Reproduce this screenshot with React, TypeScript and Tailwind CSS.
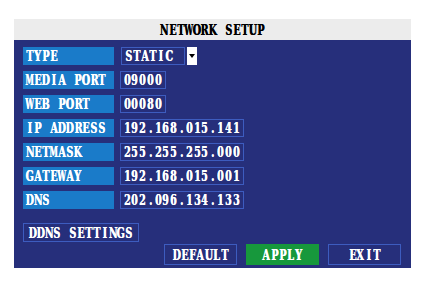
import type { FC } from 'react';

// DVR style font: bold slab serif squeezed into fixed 8px cells
const Mono: FC<{ t: string; cell?: string }> = ({ t, cell = 'w-[8px]' }) => (
  <span className="inline-flex [text-shadow:0.5px_0_0_currentColor]">
    {t.split('').map((c, i) => (
      <span key={i} className={cell + ' inline-flex justify-center'}>
        <span className={'inline-block ' + (c === 'M' || c === 'W' ? 'scale-x-[0.5]' : 'scale-x-[0.62]')}>
          {c === ' ' ? '\u00a0' : c}
        </span>
      </span>
    ))}
  </span>
);

const rows: { label: string; value: string; width: string }[] = [
  { label: 'MEDIA PORT', value: '09000', width: 'w-[46px]' },
  { label: 'WEB PORT', value: '00080', width: 'w-[46px]' },
  { label: 'IP ADDRESS', value: '192.168.015.141', width: 'w-[124px]' },
  { label: 'NETMASK', value: '255.255.255.000', width: 'w-[124px]' },
  { label: 'GATEWAY', value: '192.168.015.001', width: 'w-[124px]' },
  { label: 'DNS', value: '202.096.134.133', width: 'w-[124px]' },
];

const Label: FC<{ text: string }> = ({ text }) => (
  <div className="w-[91px] h-[18px] bg-[#1a7bc9] flex items-center pl-[3px] text-white">
    <Mono t={text} />
  </div>
);

const Btn: FC<{ text: string; green?: boolean }> = ({ text, green }) => (
  <div
    className={
      'w-[73px] h-[21px] flex items-center justify-center text-white border ' +
      (green ? 'bg-[#17983c] border-[#17983c]' : 'border-[#3d5cbf]')
    }
  >
    <Mono t={text} />
  </div>
);

export default function App() {
  return (
    <div className="w-[425px] h-[283px] bg-white pt-[19px] pl-[14px]">
      <div className="w-[397px] font-bold text-[15.5px] leading-none font-['DejaVu_Serif',serif]">
        <div className="h-[21px] bg-[#ececec] flex items-center justify-center text-black">
          <Mono t="NETWORK SETUP" />
        </div>
        <div className="h-[228px] bg-[#262f7b] pl-[9px] pt-[7px] flex flex-col">
          <div className="flex flex-col gap-[6px]">
            <div className="flex items-center gap-[7px]">
              <Label text="TYPE" />
              <div className="flex items-center gap-[2px]">
                <div className="w-[64px] h-[18px] border border-[#3d5cbf] flex items-center pl-[3px] text-white">
                  <Mono t="STATIC" />
                </div>
                <div className="w-[10px] h-[18px] bg-white flex items-center justify-center">
                  <svg width="6" height="4" viewBox="0 0 6 4">
                    <path d="M0 0 H6 L3 4 Z" fill="#000" />
                  </svg>
                </div>
              </div>
            </div>
            {rows.map((r) => (
              <div key={r.label} className="flex items-center gap-[6px]">
                <Label text={r.label} />
                <div className={r.width + ' h-[18px] border border-[#3d5cbf] flex items-center pl-[2px] text-white'}>
                  <Mono t={r.value} cell="w-[7.8px]" />
                </div>
              </div>
            ))}
          </div>
          <div className="mt-[14px] w-[116px] h-[19px] border border-[#3d5cbf] flex items-center justify-center text-white">
            <Mono t="DDNS SETTINGS" />
          </div>
          <div className="mt-[2px] flex gap-[9px] pl-[141px]">
            <Btn text="DEFAULT" />
            <Btn text="APPLY" green />
            <Btn text="EXIT" />
          </div>
        </div>
      </div>
    </div>
  );
}
